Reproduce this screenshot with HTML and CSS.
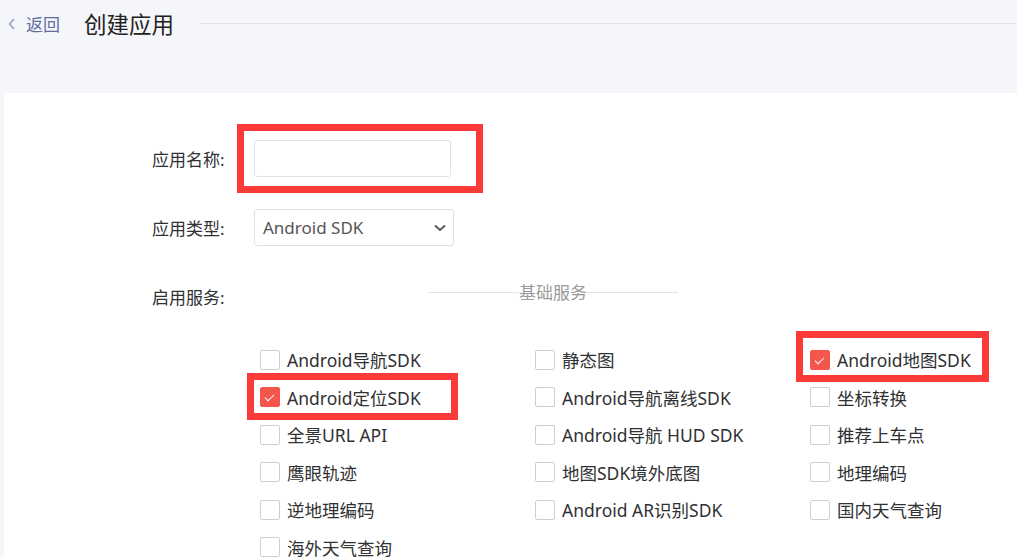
FILE: index.html
```html
<!DOCTYPE html>
<html lang="zh-CN">
<head>
<meta charset="utf-8">
<title>创建应用</title>
<link rel="stylesheet" href="styles.css">
</head>
<body>
<header class="topbar">
  <a class="back" href="#">
    <svg class="back-icon" width="8" height="12" viewBox="0 0 8 12"><path d="M6 1 L1.5 6 L6 11" fill="none" stroke="#8a94b8" stroke-width="1.2"/></svg>
    <span>返回</span>
  </a>
  <h1 class="title">创建应用</h1>
  <div class="rule"></div>
</header>
<main class="card">
  <form class="form">
    <div class="row">
      <label class="label">应用名称:</label>
      <input class="input" type="text">
    </div>
    <div class="row">
      <label class="label">应用类型:</label>
      <div class="select">
        <span>Android SDK</span>
        <svg width="12" height="8" viewBox="0 0 12 8"><path d="M1 1.5 L6 6 L11 1.5" fill="none" stroke="#555" stroke-width="1.8"/></svg>
      </div>
    </div>
    <div class="row services-row">
      <label class="label">启用服务:</label>
      <div class="divider"><span class="line"></span><span class="divider-text">基础服务</span><span class="line"></span></div>
    </div>
    <div class="grid">
      <label class="cb"><span class="box"></span>Android导航SDK</label>
      <label class="cb"><span class="box"></span>静态图</label>
      <label class="cb"><span class="box checked"></span>Android地图SDK</label>
      <label class="cb"><span class="box checked"></span>Android定位SDK</label>
      <label class="cb"><span class="box"></span>Android导航离线SDK</label>
      <label class="cb"><span class="box"></span>坐标转换</label>
      <label class="cb"><span class="box"></span>全景URL API</label>
      <label class="cb"><span class="box"></span>Android导航 HUD SDK</label>
      <label class="cb"><span class="box"></span>推荐上车点</label>
      <label class="cb"><span class="box"></span>鹰眼轨迹</label>
      <label class="cb"><span class="box"></span>地图SDK境外底图</label>
      <label class="cb"><span class="box"></span>地理编码</label>
      <label class="cb"><span class="box"></span>逆地理编码</label>
      <label class="cb"><span class="box"></span>Android AR识别SDK</label>
      <label class="cb"><span class="box"></span>国内天气查询</label>
      <label class="cb"><span class="box"></span>海外天气查询</label>
    </div>
  </form>
  <div class="mark mark-name"></div>
  <div class="mark mark-loc"></div>
  <div class="mark mark-map"></div>
</main>
</body>
</html>
```
FILE: styles.css
```css
* { box-sizing: border-box; }
html, body { margin: 0; padding: 0; }
body {
  background: #f5f6fa;
  font-family: "Noto Sans", "Noto Sans CJK SC", sans-serif;
  color: #303133;
  overflow: hidden;
  height: 557px;
}
.topbar {
  display: flex;
  align-items: center;
  height: 46px;
  padding-left: 8px;
}
.back {
  display: flex;
  align-items: center;
  gap: 10px;
  color: #5f6e9e;
  text-decoration: none;
  font-size: 17px;
}
.back-icon { margin-top: 1px; }
.title {
  margin: 0 0 0 24px;
  font-size: 22.5px;
  font-weight: 400;
  color: #222;
}
.rule {
  flex: 1;
  height: 1px;
  background: #e2e4ea;
  margin-left: 25px;
  align-self: flex-start;
  margin-top: 23px;
}
.card {
  position: relative;
  margin: 47px 0 0 4px;
  background: #fff;
  border-radius: 4px 0 0 0;
  height: 464px;
  overflow: hidden;
}
.form {
  padding: 47px 0 0 148px;
}
.row {
  display: flex;
  align-items: center;
  height: 37px;
  margin-bottom: 32px;
}
.label {
  width: 102px;
  font-size: 17px;
  color: #303133;
}
.input {
  width: 197px;
  height: 37px;
  border: 1px solid #dde1ea;
  border-radius: 3px;
  background: #fff;
}
.select {
  width: 200px;
  height: 37px;
  border: 1px solid #dde1ea;
  border-radius: 3px;
  display: flex;
  align-items: center;
  justify-content: space-between;
  padding: 0 7px 0 8px;
  font-size: 17px;
  color: #555;
}
.services-row { margin-bottom: 0; height: 37px; }
.divider {
  display: flex;
  align-items: center;
  margin-left: 174px;
  margin-bottom: 9px;
  width: 250px;
}
.line { flex: 1; height: 1px; background: #e3e3e3; }
.divider-text { color: #9a9a9a; font-size: 17px; line-height: 1; }
.grid {
  display: grid;
  grid-template-columns: repeat(3, 275px);
  grid-auto-rows: 37.5px;
  margin: 26px 0 0 108px;
}
.cb {
  display: flex;
  align-items: center;
  gap: 7px;
  font-size: 17.5px;
  color: #303133;
  white-space: nowrap;
}
.box {
  width: 20px;
  height: 20px;
  border: 1px solid #cfcfcf;
  border-radius: 2px;
  background: #fff;
  flex: none;
  position: relative;
}
.box.checked {
  background: #f5564c;
  border-color: #f5564c;
}
.box.checked::after {
  content: "";
  position: absolute;
  left: 6px;
  top: 4px;
  width: 4px;
  height: 8px;
  border: solid #fff;
  border-width: 0 1.5px 1.5px 0;
  transform: rotate(45deg);
}
.mark {
  position: absolute;
  border: 7px solid #fc3a3a;
}
.mark-name { left: 233px; top: 31px; width: 246px; height: 69px; }
.mark-loc { left: 243px; top: 280px; width: 211px; height: 47px; }
.mark-map { left: 792px; top: 238px; width: 193px; height: 51px; }
```
